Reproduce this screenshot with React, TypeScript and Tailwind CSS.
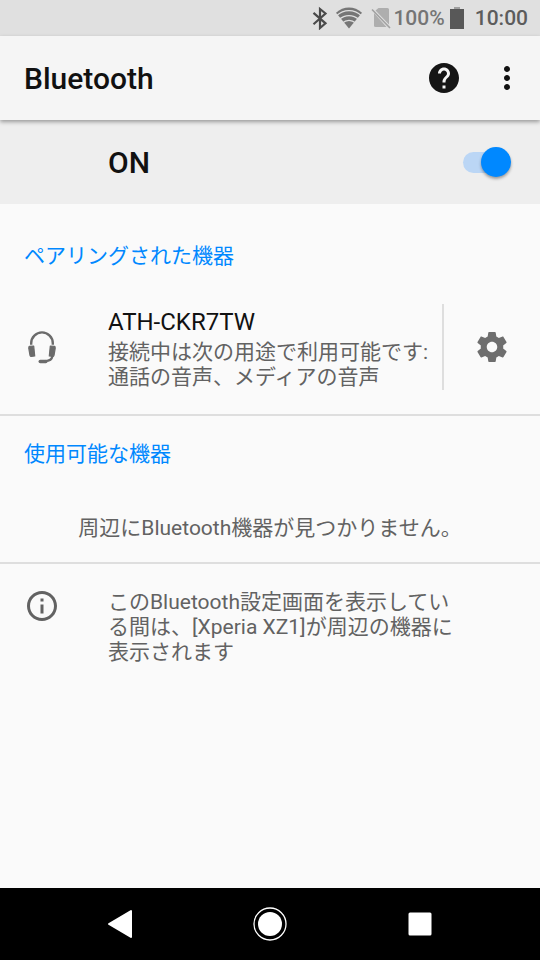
import { useState } from "react";
import type { ReactNode } from "react";
import { MdHelp, MdInfoOutline, MdMoreVert } from "react-icons/md";

function StatusBar() {
  return (
    <div className="flex h-9 shrink-0 items-center justify-end bg-[#e0e0e0] pr-3 text-[21px] font-medium">
      <svg className="mr-1 h-6 w-5" viewBox="0 0 20 24" fill="none" stroke="#4a4a4a" strokeWidth="2.2" aria-hidden="true">
        <path d="M2.500 6.800L14.500 17.300 9 22V3l5.500 4.500L2.500 18.200" />
      </svg>
      <svg className="mr-2 h-6 w-7" viewBox="0 0 28 24" aria-hidden="true">
        <path d="M1 6.800C8.500-0.400 19.500-0.400 27 6.800L14 22.500z" fill="#767676" />
        <g fill="none" stroke="#e0e0e0" strokeWidth="1.300">
          <path d="M1.500 9.700c7.500-6.800 17.500-6.800 25 0" />
          <path d="M4 13.600c6-5.400 14-5.400 20 0" />
          <path d="M7 17.300c4.500-3.800 9.500-3.800 14 0" />
        </g>
      </svg>
      <svg className="mr-0.5 h-6 w-5" viewBox="0 0 20 24" aria-hidden="true">
        <path d="M7.500 2H16.500Q18 2 18 3.500V18.500L4.500 4.500z" fill="#aeaeae" />
        <path d="M3 7L15.500 21H4.500Q3 21 3 19.500z" fill="#aeaeae" />
        <path d="M1 3.500L19 22" stroke="#a2a2a2" strokeWidth="1.600" />
      </svg>
      <span className="pt-0.5 text-[#757575]">100%</span>
      <svg className="mr-2.5 ml-1 h-6 w-4" viewBox="0 0 16 24" fill="#585858" aria-hidden="true">
        <path d="M5 1h6v2H5z" fill="#a0a0a0" />
        <path d="M1 3h14v20H1z" />
      </svg>
      <span className="pt-0.5 text-[#5c5c5c]">10:00</span>
    </div>
  );
}

function SectionTitle({ children }: { children: ReactNode }) {
  return <h2 className="px-6 text-[21px] leading-6 text-[#0088ff]">{children}</h2>;
}

function HeadsetIcon() {
  return (
    <svg className="size-9" viewBox="0 0 36 36" fill="none" stroke="#6b6b6b" aria-hidden="true">
      <path d="M7.200 15.800V14.200a10.800 10.800 0 0 1 21.600 0v1.600" strokeWidth="2.400" />
      <path d="M5.500 17.400l4.200-.400 1 10-3.400.500q-1 0-1.300-1.200l-1.200-7q-.200-1.600.700-1.900z" fill="#6b6b6b" strokeWidth="1.200" strokeLinejoin="round" />
      <path d="M30.500 17.400l-4.200-.400-1 10 3.400.500q1 0 1.300-1.200l1.200-7q.200-1.600-.700-1.900z" fill="#6b6b6b" strokeWidth="1.200" strokeLinejoin="round" />
      <path d="M28.500 27c-.600 3.500-3 5-7 5" strokeWidth="2.200" />
      <path d="M16.300 32.500h5.500" strokeWidth="3.600" strokeLinecap="round" />
    </svg>
  );
}

function GearIcon() {
  return (
    <svg className="size-9" viewBox="0 0 24 24" fill="currentColor" aria-hidden="true">
      <path d="M19.43 12.98c.04-.32.07-.64.07-.98s-.03-.66-.07-.98l2.11-1.65c.19-.15.24-.42.12-.64l-2-3.46c-.12-.22-.39-.3-.61-.22l-2.49 1c-.52-.4-1.08-.73-1.69-.98l-.38-2.65C14.46 2.18 14.25 2 14 2h-4c-.25 0-.46.18-.49.42l-.38 2.65c-.61.25-1.17.59-1.69.98l-2.49-1c-.23-.09-.49 0-.61.22l-2 3.46c-.13.22-.07.49.12.64l2.11 1.65c-.04.32-.07.65-.07.98s.03.66.07.98l-2.11 1.65c-.19.15-.24.42-.12.64l2 3.46c.12.22.39.3.61.22l2.490-1c.52.4 1.08.73 1.69.98l.38 2.65c.03.24.24.42.49.42h4c.25 0 .46-.18.49-.42l.38-2.65c.61-.25 1.17-.59 1.69-.98l2.490 1c.23.09.49 0 .61-.22l2-3.46c.12-.22.07-.49-.12-.64l-2.11-1.65zM12 15.500c-1.930 0-3.500-1.570-3.500-3.500s1.570-3.500 3.500-3.500 3.500 1.570 3.500 3.500-1.570 3.500-3.500 3.500z" />
    </svg>
  );
}

export default function App() {
  const [on, setOn] = useState(true);
  return (
    <div className="flex min-h-screen flex-col bg-[#fafafa] font-[Roboto,'Noto_Sans_CJK_JP',sans-serif]" lang="ja">
      <StatusBar />

      <header className="relative flex h-21 shrink-0 items-center bg-[#f5f5f5] pr-[15px] pl-6 shadow-[0_2px_4px_rgba(0,0,0,0.35)]">
        <h1 className="flex-1 pt-0.5 text-3xl leading-9 font-medium text-[#111]">Bluetooth</h1>
        <button type="button" aria-label="ヘルプ" className="mr-[27px] text-[#151515]">
          <MdHelp className="size-9" />
        </button>
        <button type="button" aria-label="その他" className="text-[#111]">
          <MdMoreVert className="size-9" />
        </button>
      </header>

      <label className="flex h-21 shrink-0 items-center bg-[#eee] pr-[29px] pl-27">
        <span className="flex-1 pt-0.5 text-3xl leading-9 font-medium text-[#111]">ON</span>
        <input
          type="checkbox"
          role="switch"
          checked={on}
          onChange={(e) => setOn(e.target.checked)}
          className="flex h-[21px] w-12 appearance-none items-center rounded-full bg-[#c4c4c4] before:size-[30px] before:shrink-0 before:rounded-full before:bg-[#f5f5f5] before:shadow-[0_2px_3px_rgba(0,0,0,0.35)] checked:justify-end checked:bg-[#bbd6f5] checked:before:bg-[#0088ff]"
        />
      </label>

      <main className="flex-1 text-[21px] leading-[25px] text-[#626262]">
        <section className="border-b-2 border-[#dedede] pt-10">
          <SectionTitle>ペアリングされた機器</SectionTitle>
          <div className="flex items-center pt-9 pb-6">
            <div className="w-27 shrink-0 pl-6">
              <HeadsetIcon />
            </div>
            <div className="min-w-0 flex-1 pt-0.5">
              <h3 className="mb-0.5 text-2xl leading-8 text-[#111]">ATH-CKR7TW</h3>
              <p>接続中は次の用途で利用可能です: 通話の音声、メディアの音声</p>
            </div>
            <div className="flex h-[86px] w-[98px] shrink-0 items-center justify-center border-l-2 border-[#dedede]">
              <button type="button" aria-label="設定" className="text-[#6e6e6e]">
                <GearIcon />
              </button>
            </div>
          </div>
        </section>

        <section className="border-b-2 border-[#dedede] pt-[26px]">
          <SectionTitle>使用可能な機器</SectionTitle>
          <p className="px-6 pt-[50px] pb-[21px] text-center">周辺にBluetooth機器が見つかりません。</p>
        </section>

        <section className="flex py-6 pr-20">
          <div className="w-27 shrink-0 pl-6">
            <MdInfoOutline className="size-9" aria-hidden="true" />
          </div>
          <p className="flex-1 pt-0.5">このBluetooth設定画面を表示している間は、[Xperia XZ1]が周辺の機器に表示されます</p>
        </section>
      </main>

      <nav className="flex h-18 shrink-0 items-center justify-center gap-[114px] bg-black text-white">
        <button type="button" aria-label="戻る">
          <svg className="size-9" viewBox="0 0 36 36" fill="white" stroke="white" strokeWidth="2" strokeLinejoin="round">
            <path d="M7 18L29 5v26z" />
          </svg>
        </button>
        <button type="button" aria-label="ホーム">
          <svg className="size-9" viewBox="0 0 36 36" fill="none" stroke="white">
            <circle cx="18" cy="18" r="16" strokeWidth="1.300" />
            <circle cx="18" cy="18" r="12" fill="white" stroke="none" />
          </svg>
        </button>
        <button type="button" aria-label="アプリ履歴">
          <svg className="size-9" viewBox="0 0 36 36" fill="white">
            <rect x="6.500" y="6.500" width="23" height="23" rx="1.500" />
          </svg>
        </button>
      </nav>
    </div>
  );
}
